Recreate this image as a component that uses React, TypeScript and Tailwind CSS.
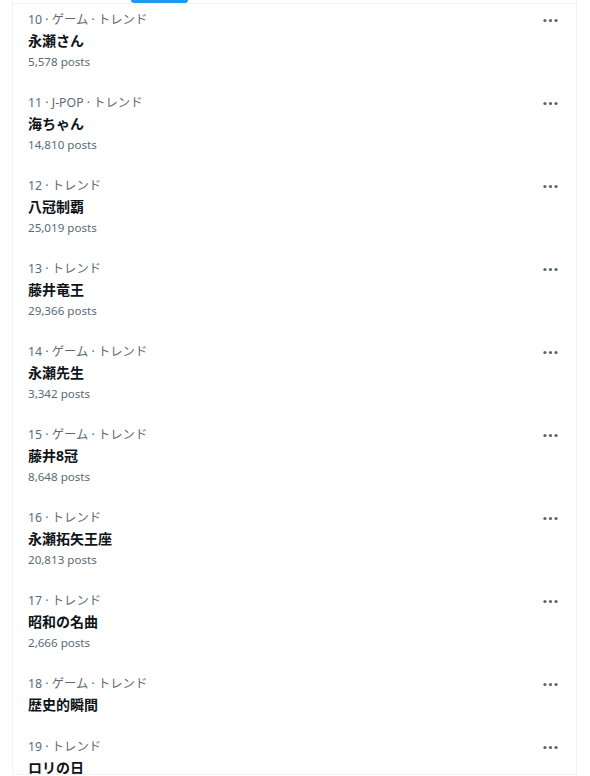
import React from "react";

type Trend = { rank: number; cat: string; title: string; posts?: string };

const trends: Trend[] = [
  { rank: 10, cat: "ゲーム · トレンド", title: "永瀬さん", posts: "5,578 posts" },
  { rank: 11, cat: "J-POP · トレンド", title: "海ちゃん", posts: "14,810 posts" },
  { rank: 12, cat: "トレンド", title: "八冠制覇", posts: "25,019 posts" },
  { rank: 13, cat: "トレンド", title: "藤井竜王", posts: "29,366 posts" },
  { rank: 14, cat: "ゲーム · トレンド", title: "永瀬先生", posts: "3,342 posts" },
  { rank: 15, cat: "ゲーム · トレンド", title: "藤井8冠", posts: "8,648 posts" },
  { rank: 16, cat: "トレンド", title: "永瀬拓矢王座", posts: "20,813 posts" },
  { rank: 17, cat: "トレンド", title: "昭和の名曲", posts: "2,666 posts" },
  { rank: 18, cat: "ゲーム · トレンド", title: "歴史的瞬間" },
  { rank: 19, cat: "トレンド", title: "ロリの日", posts: "1,234 posts" },
];

function Dots() {
  return (
    <svg width="19" height="19" viewBox="0 0 24 24" fill="#536471" aria-hidden>
      <circle cx="5" cy="12" r="2" />
      <circle cx="12" cy="12" r="2" />
      <circle cx="19" cy="12" r="2" />
    </svg>
  );
}

export default function App() {
  return (
    <div
      className="w-[590px] h-[776px] bg-white overflow-hidden"
      style={{ fontFamily: '"Noto Sans", "Noto Sans CJK JP", sans-serif' }}
    >
      <div className="relative ml-[12px] w-[565px] h-[775px] border-l border-r border-b border-[#eff3f4] overflow-hidden">
        <div className="absolute top-0 left-0 right-0 h-[4px] border-b border-[#eff3f4] z-10">
          <div className="ml-[118px] w-[57px] h-[3px] rounded-b-full bg-[#1d9bf0]" />
        </div>
        <div className="flex flex-col">
          {trends.map((t) => (
            <div key={t.rank} className="flex items-start pl-[15px] pr-[14px] pt-[10px] pb-[11px]">
              <div className="flex-1 flex flex-col">
                <div className="text-[12.3px] leading-[20px] text-[#5b6a76]">
                  {t.rank} · {t.cat}
                </div>
                <div className="text-[14px] leading-[22px] font-bold text-[#0f1419]">{t.title}</div>
                {t.posts && (
                  <div className="text-[11.6px] leading-[20px] text-[#5b6a76]">{t.posts}</div>
                )}
              </div>
              <div className="mt-[1px] mr-[2px]">
                <Dots />
              </div>
            </div>
          ))}
        </div>
      </div>
    </div>
  );
}
